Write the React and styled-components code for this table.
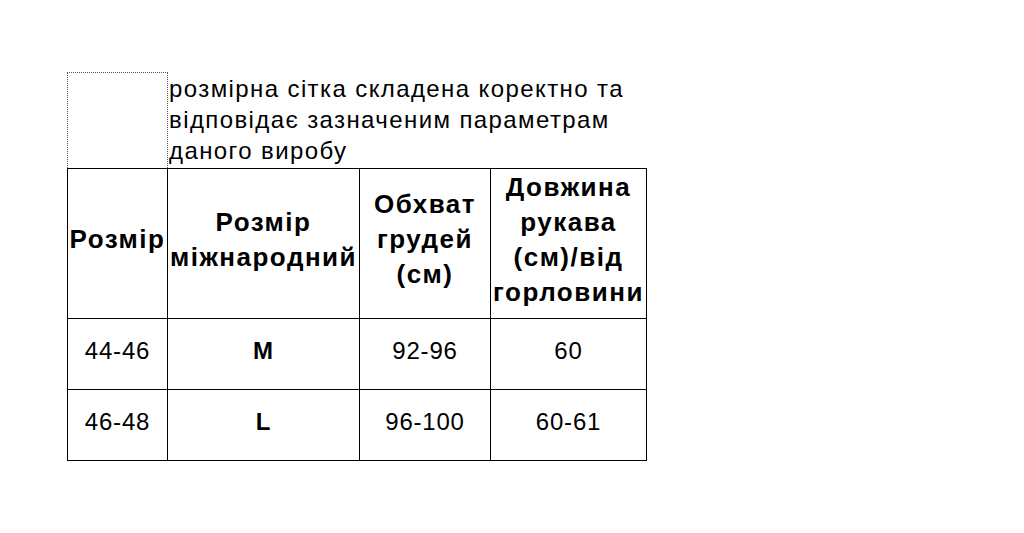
import React from "react";
import styled, { createGlobalStyle } from "styled-components";

const Global = createGlobalStyle`
  html, body { margin: 0; padding: 0; background: #fff; }
  body { font-family: "Liberation Sans", Arial, sans-serif; color: #000; }
`;

const Page = styled.div`
  padding: 72px 0 0 67px;
`;

const Table = styled.table`
  border-collapse: collapse;
  table-layout: fixed;
  width: 580px;
`;

const NoteRow = styled.tr`
  height: 96px;
`;

const Blank = styled.td`
  border: 1px dotted #555;
  padding: 0;
`;

const Note = styled.td`
  font-size: 24px;
  line-height: 31px;
  letter-spacing: 1.4px;
  padding: 0 1px;
  vertical-align: top;
  text-align: left;
`;

const Row = styled.tr`
  height: ${(p) => p.$h}px;
`;

const Cell = styled.td`
  border: 1px solid #000;
  padding: ${(p) => (p.$head ? "0 0 8px" : "0 0 6px")};
  text-align: center;
  vertical-align: middle;
  font-size: ${(p) => (p.$head ? 26 : 24)}px;
  line-height: ${(p) => (p.$head ? 35 : 28)}px;
  letter-spacing: ${(p) => (p.$head ? 1.5 : 0.8)}px;
  font-weight: ${(p) => (p.$bold ? 700 : 400)};
`;

const headers = [
  "Розмір",
  "Розмір міжнародний",
  "Обхват грудей (см)",
  "Довжина рукава (см)/від горловини",
];

const rows = [
  ["44-46", "M", "92-96", "60"],
  ["46-48", "L", "96-100", "60-61"],
];

export default function App() {
  return (
    <Page>
      <Global />
      <Table>
        <colgroup>
          <col style={{ width: 100 }} />
          <col style={{ width: 192 }} />
          <col style={{ width: 131 }} />
          <col style={{ width: 156 }} />
        </colgroup>
        <tbody>
          <NoteRow>
            <Blank />
            <Note colSpan={3}>
              розмірна сітка складена коректно та відповідає зазначеним параметрам даного виробу
            </Note>
          </NoteRow>
          <Row $h={150}>
            {headers.map((h) => (
              <Cell key={h} $head $bold>
                {h}
              </Cell>
            ))}
          </Row>
          {rows.map((r) => (
            <Row key={r[0]} $h={71}>
              {r.map((v, i) => (
                <Cell key={i} $bold={i === 1}>
                  {v}
                </Cell>
              ))}
            </Row>
          ))}
        </tbody>
      </Table>
    </Page>
  );
}
